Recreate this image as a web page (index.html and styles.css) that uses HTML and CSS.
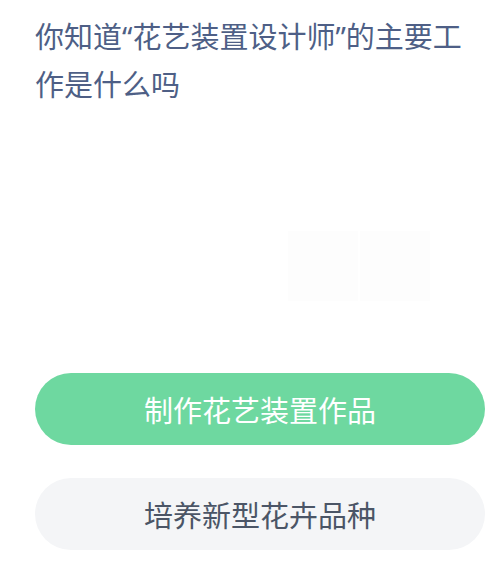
FILE: index.html
```html
<!DOCTYPE html>
<html lang="zh-CN">

<head>
    <meta charset="utf-8">
    <title>答题</title>
    <link rel="stylesheet" href="styles.css">
</head>

<body>
    <div class="quiz">
        <p class="question">你知道“花艺装置设计师”的主要工作是什么吗</p>

        <!-- faint illustration behind the question -->
        <div class="art">
            <div class="art-panel"></div>
            <div class="art-panel"></div>
        </div>

        <div class="options">
            <button class="option option-picked">制作花艺装置作品</button>
            <button class="option">培养新型花卉品种</button>
        </div>
    </div>
</body>

</html>
```

FILE: styles.css
```css
/* Page */
body {
    margin: 0;
    padding: 0;
    background-color: #ffffff;
    font-family: "Noto Sans CJK SC", "Noto Sans", sans-serif;
}

.quiz {
    width: 489px;
    height: 578px;
    padding: 13px 4px 0 35px;
    box-sizing: border-box;
}

/* Question text, Latin font first so the quotes stay narrow */
.question {
    margin: 0;
    max-width: 436px;
    font-family: "Noto Sans", "Noto Sans CJK SC", sans-serif;
    font-size: 29px;
    line-height: 48px;
    color: #4e5f86;
}

/* Barely visible picture in the middle */
.art {
    display: flex;
    gap: 2px;
    height: 70px;
    margin: 122px 0 0 253px;
}

.art-panel {
    width: 70px;
    background-color: #fdfdfd;
}

/* Answer buttons */
.options {
    display: flex;
    flex-direction: column;
    gap: 33px;
    margin-top: 72px;
}

.option {
    height: 72px;
    width: 450px;
    border: none;
    border-radius: 36px;
    background-color: #f4f5f7;
    color: #4b5566;
    font-family: inherit;
    font-size: 29px;
    padding: 0;
    cursor: pointer;
}

.option-picked {
    background-color: #6ed8a0;
    color: #ffffff;
}
```
